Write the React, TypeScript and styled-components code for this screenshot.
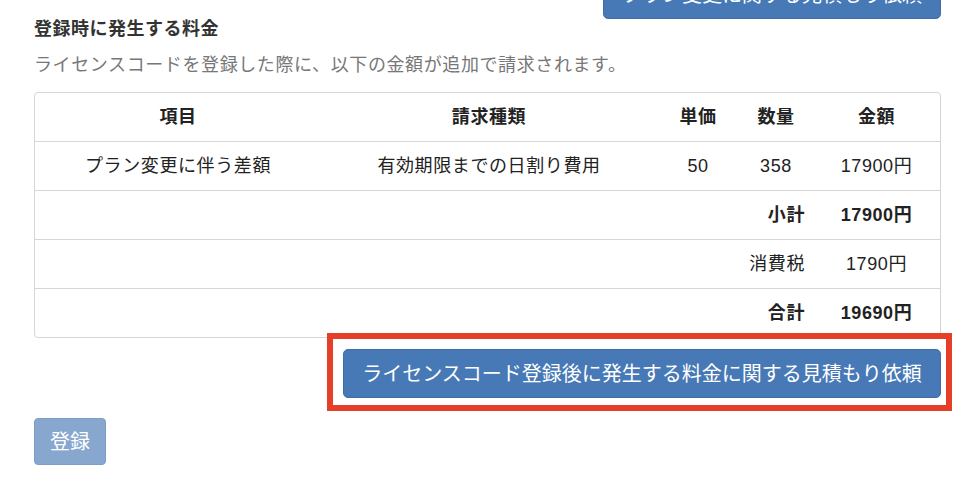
import * as React from 'react'
import styled, { createGlobalStyle } from 'styled-components'

const GlobalStyle = createGlobalStyle`
  html, body {
    margin: 0;
    padding: 0;
    background: #fff;
    overflow: hidden;
  }
  body {
    font-family: "Liberation Sans", "Noto Sans CJK JP", sans-serif;
    color: #333;
  }
`

const Page = styled.div`
  width: 907px;
  padding: 0 19px 0 34px;
`

const TopRow = styled.div`
  display: flex;
  justify-content: flex-end;
  margin-top: -30px;
`

const PrimaryButton = styled.button<{ $width?: number }>`
  height: 49px;
  padding: 0 18px;
  border: 1px solid #3f6ea8;
  border-radius: 5px;
  background: #4679b5;
  color: #fff;
  font-family: inherit;
  font-size: 20px;
  line-height: 24px;
  white-space: nowrap;
  cursor: pointer;
  ${p => (p.$width ? `width: ${p.$width}px;` : '')}
`

const Title = styled.h3`
  margin: 0;
  font-size: 18px;
  line-height: 20px;
  letter-spacing: 0.5px;
  font-weight: bold;
  color: #333;
`

const Lead = styled.p`
  margin: 13px 0 14px;
  font-size: 18px;
  line-height: 26px;
  letter-spacing: 0.6px;
  color: #777;
`

const TableFrame = styled.div`
  border: 1px solid #d6d6d6;
  border-radius: 4px;
  overflow: hidden;
`

const Table = styled.table`
  width: 100%;
  border-collapse: collapse;
  table-layout: fixed;
  font-size: 18px;
  letter-spacing: 0.6px;

  tbody td {
    border-top: 1px solid #d6d6d6;
  }
`

const Cell = styled.td<{ $align?: 'left' | 'center' | 'right'; $bold?: boolean }>`
  height: 49px;
  padding: 0 8px;
  line-height: 24px;
  text-align: ${p => p.$align || 'center'};
  font-weight: ${p => (p.$bold ? 'bold' : 'normal')};
  color: #222;
  white-space: nowrap;
  box-sizing: border-box;
`

const HeadCell = styled.th`
  height: 48px;
  padding: 0 8px;
  line-height: 24px;
  text-align: center;
  font-weight: bold;
  color: #222;
  box-sizing: border-box;
`

const ActionRow = styled.div`
  display: flex;
  justify-content: flex-end;
  margin-top: 11px;
`

const Highlight = styled.div`
  position: relative;
  display: flex;
  &::after {
    content: '';
    position: absolute;
    top: -16px;
    left: -16px;
    right: -11px;
    bottom: -13px;
    border: 6px solid #e63f27;
    pointer-events: none;
  }
`

const SubmitRow = styled.div`
  margin-top: 20px;
`

const SubmitButton = styled.button`
  height: 47px;
  padding: 0 15px;
  border: 1px solid #7d9dc6;
  border-radius: 4px;
  background: #87a7cf;
  color: #fff;
  font-family: inherit;
  font-size: 20px;
  line-height: 24px;
  cursor: not-allowed;
`

const totals = [
  { label: '小計', value: '17900円', bold: true },
  { label: '消費税', value: '1790円', bold: false },
  { label: '合計', value: '19690円', bold: true },
]

export default function App() {
  return (
    <Page>
      <GlobalStyle />
      <TopRow>
        <PrimaryButton>プラン変更に関する見積もり依頼</PrimaryButton>
      </TopRow>
      <Title>登録時に発生する料金</Title>
      <Lead>ライセンスコードを登録した際に、以下の金額が追加で請求されます。</Lead>
      <TableFrame>
        <Table>
          <colgroup>
            <col style={{ width: 286 }} />
            <col style={{ width: 336 }} />
            <col style={{ width: 82 }} />
            <col style={{ width: 74 }} />
            <col />
          </colgroup>
          <thead>
            <tr>
              <HeadCell>項目</HeadCell>
              <HeadCell>請求種類</HeadCell>
              <HeadCell>単価</HeadCell>
              <HeadCell>数量</HeadCell>
              <HeadCell>金額</HeadCell>
            </tr>
          </thead>
          <tbody>
            <tr>
              <Cell>プラン変更に伴う差額</Cell>
              <Cell>有効期限までの日割り費用</Cell>
              <Cell>50</Cell>
              <Cell>358</Cell>
              <Cell>17900円</Cell>
            </tr>
            {totals.map(t => (
              <tr key={t.label}>
                <Cell colSpan={3} />
                <Cell $align="right" $bold={t.bold}>{t.label}</Cell>
                <Cell $bold={t.bold}>{t.value}</Cell>
              </tr>
            ))}
          </tbody>
        </Table>
      </TableFrame>
      <ActionRow>
        <Highlight>
          <PrimaryButton $width={598}>ライセンスコード登録後に発生する料金に関する見積もり依頼</PrimaryButton>
        </Highlight>
      </ActionRow>
      <SubmitRow>
        <SubmitButton disabled>登録</SubmitButton>
      </SubmitRow>
    </Page>
  )
}
